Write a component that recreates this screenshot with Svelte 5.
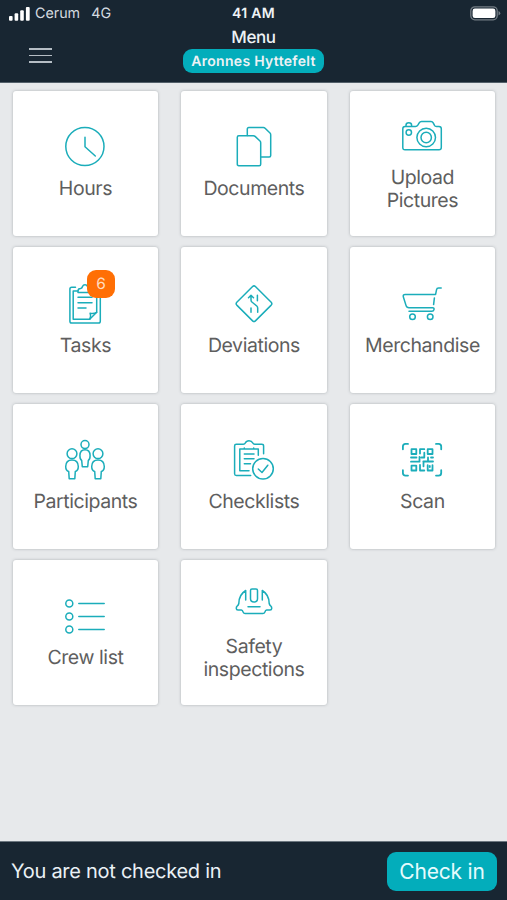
<script>
  const tiles = [
    { icon: 'hours', lines: ['Hours'] },
    { icon: 'documents', lines: ['Documents'] },
    { icon: 'camera', lines: ['Upload', 'Pictures'] },
    { icon: 'tasks', lines: ['Tasks'], badge: 6 },
    { icon: 'deviations', lines: ['Deviations'] },
    { icon: 'cart', lines: ['Merchandise'] },
    { icon: 'people', lines: ['Participants'] },
    { icon: 'checklist', lines: ['Checklists'] },
    { icon: 'scan', lines: ['Scan'] },
    { icon: 'crew', lines: ['Crew list'] },
    { icon: 'helmet', lines: ['Safety', 'inspections'] }
  ];
</script>

{#snippet glyph(name)}
  <svg class="icon" viewBox="0 0 40 40">
    {#if name === 'hours'}
      <circle cx="19.9" cy="19.5" r="19.1" />
      <path d="M20 10.3V19.7L30.3 29" />
    {:else if name === 'documents'}
      <path d="M4.8 8.7H19.4Q20.4 8.7 21.1 9.4L26 14Q26.7 14.7 26.7 15.7V37.2Q26.7 38.7 25.2 38.7H4.8Q3.3 38.7 3.3 37.2V10.2Q3.3 8.7 4.8 8.7Z" />
      <path d="M13.3 8.5V2.1Q13.3 .6 14.8 .6H29.4Q30.4 .6 31.1 1.3L36 6Q36.7 6.7 36.7 7.7V28.5Q36.7 30 35.2 30H27" />
    {:else if name === 'camera'}
      <path d="M3 10.5H13.5Q15 10.5 15.8 9.2L17.2 6.8Q18 5.5 19.5 5.5H29Q30.5 5.5 31.2 6.8L32.4 9.2Q33 10.5 34.5 10.5H37Q39.3 10.5 39.3 12.8V31.5Q39.3 33.8 37 33.8H3Q.8 33.8 .8 31.5V12.8Q.8 10.5 3 10.5Z" />
      <path d="M4 10.3V9.3Q4 6.8 6.8 6.8T9.6 9.3V10.3" />
      <circle cx="6.8" cy="16.5" r="2.7" />
      <circle cx="24.2" cy="21.5" r="9.3" />
      <circle cx="24.2" cy="21.5" r="5.2" />
    {:else if name === 'tasks'}
      <path d="M10.5 3.3H6.7Q4.9 3.3 4.9 5.1V37.2Q4.9 39 6.7 39H33.5Q35.3 39 35.3 37.2V5.1Q35.3 3.3 33.5 3.3H29.5" />
      <path d="M12.5 7H8.2V35.3H24.7L31.7 28.3V7H27.5" />
      <path d="M24.7 35.3Q26.4 32 25.1 29.2Q28.5 30 31.7 28.3" />
      <path d="M13 8.5V7Q13 4.4 15.5 4.4Q17.2 4.2 17.5 2.5Q18.2 .7 20 .7T22.5 2.5Q23 4.4 25 4.4T27 7V8.5Z" />
      <path d="M13 13.3H27M13 18.8H27M13 24.1H21" />
    {:else if name === 'deviations'}
      <path d="M18.6 2.5Q20 1.2 21.4 2.5L37.2 18.3Q38.5 19.7 37.2 21.1L21.4 36.9Q20 38.2 18.6 36.9L2.8 21.1Q1.5 19.7 2.8 18.3Z" />
      <path d="M17 12V16Q17 17.2 17.9 18L22.8 22Q23.7 22.8 23.7 24V28.2M14.5 13.8L17 11.3L19.5 13.8M23.4 11.3V16.8M17 24V28.2" />
    {:else if name === 'cart'}
      <path d="M39.2 4H36.6Q34.8 4 34.5 5.8L33.6 10.4H3.2Q.8 10.4 1.3 12.8L4 21.4Q4.6 23.8 7 23.8H30.7Q32.4 23.8 32 25.6Q31.6 27.3 29.8 27.3H7M32.4 13.9L31.6 20.6" />
      <circle cx="10.5" cy="32.7" r="2.8" />
      <circle cx="28.2" cy="32.7" r="2.8" />
    {:else if name === 'people'}
      <circle cx="20" cy="4.6" r="4" />
      <path d="M17.3 26.8L16.7 20.5Q14.9 19.5 14.9 15.5Q15.1 9.8 20 9.8T25.1 15.5Q25.1 19.5 23.3 20.5L22.7 26.8Z" />
      <circle cx="7" cy="13.7" r="4.9" />
      <path d="M4.2 38.8L3.7 31.5Q.7 30.5 .7 26.5Q.9 20 7 20T13.3 26.5Q13.3 30.5 10.3 31.5L9.8 38.8Z" />
      <circle cx="33" cy="13.7" r="4.9" />
      <path d="M30.2 38.8L29.7 31.5Q26.7 30.5 26.7 26.5Q26.9 20 33 20T39.3 26.5Q39.3 30.5 36.3 31.5L35.8 38.8Z" />
    {:else if name === 'checklist'}
      <path d="M16.7 35.5H2.3Q.6 35.5 .6 33.8V6Q.6 4.3 2.3 4.3H9.3Q10.8 4.3 11.3 3Q12.3 .7 15 .7T18.8 3Q19.3 4.3 20.8 4.3H27.8Q29.6 4.3 29.6 6V13.7" />
      <path d="M15 30.8H5.8V9H24.3V15.3M10.3 9V8M19.7 9V8M10.3 14H20M10.3 18.8H20M10.3 23.7H16.5" />
      <circle cx="29" cy="28.7" r="10.3" />
      <path d="M24.3 29L28 32.5L33.8 25.2" />
    {:else if name === 'scan'}
      <path class="bold" d="M.9 9.3V6.5Q.9 3.9 3.5 3.9H6M34 3.9H36.6Q39.2 3.9 39.2 6.5V9.3M39.2 30.2V33Q39.2 35.6 36.6 35.6H34M6 35.6H3.5Q.9 35.6 .9 33V30.2" />
      <path class="bold" d="M9.5 9.2H14.3V14H9.5ZM25.7 9.2H30.5V14H25.7ZM9.5 25.7H14.3V30.5H9.5ZM18 13.5V9.2H22.3M22.3 12.7V17.5H19.3M9 17.5H14.5M17.5 17V21.7H9M21.3 21.5H31M26 17.5V21.5M29 17.5H31M18 25V30.5H22.3M21.5 21.7V26.3M25.7 25.2V30.5H30.5V25.2M27.8 26V27" />
    {:else if name === 'crew'}
      <circle cx="4.3" cy="7.5" r="3.5" />
      <circle cx="4.3" cy="20.5" r="3.5" />
      <circle cx="4.3" cy="33.5" r="3.5" />
      <path d="M13.8 7.5H39.2M13.8 20.5H39.2M13.8 33.5H39.2" />
    {:else if name === 'helmet'}
      <path d="M11.7 15V5.5Q5 9.5 4.8 18.5Q4.5 20 3 21.3Q2.2 22.2 2.3 23.5Q2.3 25 4 25H7.3Q8.6 25.2 8.9 26.7Q9.3 28.5 11 28.5H29Q30.7 28.5 31.1 26.7Q31.4 25.2 32.7 25H36Q37.7 25 37.7 23.5Q37.8 22.2 37 21.3Q35.5 20 35.2 18.5Q35 9.5 28.3 5.5V15" />
      <path d="M18 4H22Q23.5 4 23.5 5.5V13.8Q23.5 17 20 17T16.5 13.8V5.5Q16.5 4 18 4ZM14 21.8H26" />
    {/if}
  </svg>
{/snippet}

<div class="screen">
  <header>
    <div class="status">
      <div class="carrier">
        <svg class="signal" viewBox="0 0 21 14">
          <rect x="0" y="9" width="3.6" height="4.8" rx="1" />
          <rect x="5.6" y="6.3" width="3.6" height="7.5" rx="1" />
          <rect x="11.2" y="3.3" width="3.6" height="10.5" rx="1" />
          <rect x="16.9" y="0" width="3.8" height="13.8" rx="1" />
        </svg>
        <span class="operator">Cerum</span>
        <span class="network">4G</span>
      </div>
      <div class="clock">41 AM</div>
      <div class="power">
        <svg class="battery" viewBox="0 0 31 15">
          <rect x=".8" y=".8" width="26.4" height="13" rx="4" fill="none" stroke="#737c84" stroke-width="1.3" />
          <rect x="2.6" y="2.6" width="22.8" height="9.4" rx="2.3" fill="#fff" />
          <path d="M28.5 5Q30.3 5.8 30.3 7.3T28.5 9.6Z" fill="#737c84" />
        </svg>
      </div>
    </div>
    <div class="nav">
      <div class="burger"><i></i><i></i><i></i></div>
      <div class="heading">
        <span class="title">Menu</span>
        <span class="project">Aronnes Hyttefelt</span>
      </div>
      <div></div>
    </div>
  </header>

  <main>
    {#each tiles as tile}
      <div class="tile">
        <div class="figure">
          {@render glyph(tile.icon)}
          {#if tile.badge}<span class="badge">{tile.badge}</span>{/if}
        </div>
        <div class="label">
          {#each tile.lines as line}<span>{line}</span>{/each}
        </div>
      </div>
    {/each}
  </main>

  <footer>
    <span class="state">You are not checked in</span>
    <button>Check in</button>
  </footer>
</div>

<style>
  :global(body) { margin: 0; }
  .screen {
    width: 507px;
    height: 900px;
    display: flex;
    flex-direction: column;
    background: #e7e9eb;
    font-family: Inter, 'Liberation Sans', sans-serif;
    text-rendering: geometricPrecision;
    overflow: hidden;
  }
  header {
    box-sizing: border-box;
    height: 83px;
    flex: none;
    background: #182632;
    border-bottom: 1px solid #53606a;
    color: #eef2f5;
  }
  .status, .nav {
    display: grid;
    grid-template-columns: 1fr auto 1fr;
  }
  .status { height: 27px; align-items: center; }
  .carrier {
    display: flex;
    align-items: center;
    padding-left: 9px;
    font-size: 14.3px;
    color: #d5dbe0;
  }
  .signal { width: 21px; height: 14px; fill: #fff; margin-right: 5px; }
  .network { margin-left: 11px; }
  .clock { font-size: 14px; font-weight: 600; letter-spacing: .3px; }
  .power { display: flex; justify-content: flex-end; padding-right: 6px; }
  .battery { width: 31px; height: 15px; }
  .nav { height: 55px; }
  .burger {
    display: flex;
    flex-direction: column;
    gap: 5px;
    padding: 21px 0 0 29px;
  }
  .burger i { width: 23px; height: 1.5px; background: #b5bdc4; }
  .heading { display: flex; flex-direction: column; align-items: center; }
  .title { font-size: 17px; line-height: 22px; font-weight: 500; letter-spacing: -.4px; }
  .project {
    box-sizing: border-box;
    width: 141px;
    height: 24px;
    border-radius: 9px;
    background: #03adbb;
    text-align: center;
    font-size: 14px;
    line-height: 25px;
    font-weight: 600;
    letter-spacing: .3px;
    white-space: nowrap;
  }
  main {
    flex: 1;
    display: grid;
    grid-template-columns: repeat(3, 145.3px);
    grid-auto-rows: 145.3px;
    gap: 11px 23.2px;
    padding: 8px 0 0 12.8px;
  }
  .tile {
    display: flex;
    flex-direction: column;
    align-items: center;
    justify-content: center;
    gap: 9.5px;
    border-radius: 3px;
    background: #fff;
    box-shadow: 0 0 3px rgba(80, 88, 95, .4);
  }
  .figure { position: relative; width: 40px; height: 40px; }
  .icon {
    display: block;
    width: 40px;
    height: 40px;
    overflow: visible;
    fill: none;
    stroke: #1badba;
    stroke-width: 1.5;
    stroke-linecap: round;
    stroke-linejoin: round;
  }
  .bold { stroke-width: 1.8; }
  .badge {
    position: absolute;
    left: 21.8px;
    top: -13.6px;
    width: 27.5px;
    height: 27.5px;
    border-radius: 9px;
    background: #ff6f05;
    color: #ffdcc0;
    text-align: center;
    font-size: 15.5px;
    line-height: 28px;
  }
  .label {
    display: flex;
    flex-direction: column;
    align-items: center;
    padding-top: .6px;
    margin-bottom: -.6px;
    font-size: 19.5px;
    line-height: 23px;
    letter-spacing: -.42px;
    color: #5e5e5e;
  }
  footer {
    box-sizing: border-box;
    height: 59px;
    flex: none;
    display: flex;
    align-items: center;
    justify-content: space-between;
    padding: 0 10px 0 11px;
    border-top: 1px solid #6c7780;
    background: #182632;
    color: #eaf1f6;
  }
  .state { font-size: 20px; letter-spacing: -.27px; }
  button {
    width: 110px;
    height: 39px;
    padding: 0;
    border: 0;
    border-radius: 9px;
    background: #03adbb;
    color: #e6fbfd;
    font: 21px Inter, 'Liberation Sans', sans-serif;
    letter-spacing: -.2px;
  }
</style>
